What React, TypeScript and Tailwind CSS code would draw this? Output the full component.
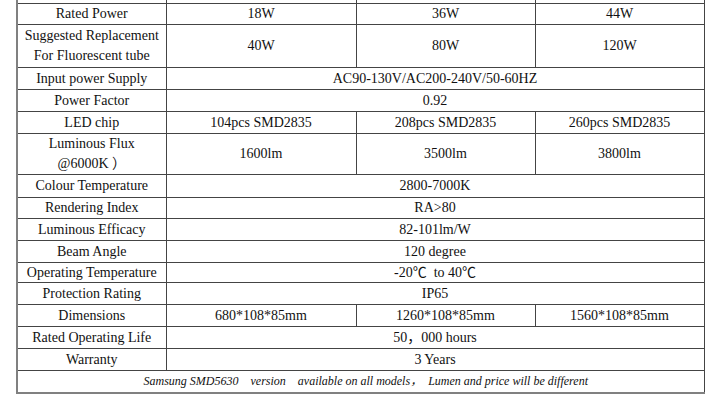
const rows: { label: React.ReactNode; values: string[]; h: number }[] = [
  { label: "Rated Power", values: ["18W", "36W", "44W"], h: 21 },
  {
    label: (
      <div className="leading-[20px]">
        Suggested Replacement
        <br />
        For Fluorescent tube
      </div>
    ),
    values: ["40W", "80W", "120W"],
    h: 43,
  },
  { label: "Input power Supply", values: ["AC90-130V/AC200-240V/50-60HZ"], h: 22 },
  { label: "Power Factor", values: ["0.92"], h: 22 },
  { label: "LED chip", values: ["104pcs SMD2835", "208pcs SMD2835", "260pcs SMD2835"], h: 22 },
  {
    label: (
      <div className="leading-[20px]">
        Luminous Flux
        <br />
        @6000K ）
      </div>
    ),
    values: ["1600lm", "3500lm", "3800lm"],
    h: 41,
  },
  { label: "Colour Temperature", values: ["2800-7000K"], h: 23 },
  { label: "Rendering Index", values: ["RA>80"], h: 21 },
  { label: "Luminous Efficacy", values: ["82-101lm/W"], h: 22 },
  { label: "Beam Angle", values: ["120 degree"], h: 22 },
  { label: "Operating Temperature", values: ["-20℃  to 40℃"], h: 20 },
  { label: "Protection Rating", values: ["IP65"], h: 22 },
  { label: "Dimensions", values: ["680*108*85mm", "1260*108*85mm", "1560*108*85mm"], h: 22 },
  { label: "Rated Operating Life", values: ["50，000 hours"], h: 22 },
  { label: "Warranty", values: ["3 Years"], h: 22 },
];

const cell = "border border-[#444] text-center align-middle p-0 leading-[17px] whitespace-pre";

export default function App() {
  return (
    <div
      className="w-[727px] h-[408px] overflow-hidden bg-white text-[14px] text-[#111]"
      style={{ fontFamily: '"Liberation Serif", "Noto Sans CJK SC", serif' }}
    >
      <div className="pl-[16px]">
        <table className="border-collapse w-[687px] table-fixed border-l-2 border-b-2 border-l-[#808080] border-b-[#808080]">
          <colgroup>
            <col className="w-[149px]" />
            <col className="w-[190px]" />
            <col className="w-[179px]" />
            <col className="w-[169px]" />
          </colgroup>
          <tbody>
            <tr className="h-[3px]">
              <td className="border border-[#444] border-t-0 p-0"></td>
              <td className="border border-[#444] border-t-0 p-0"></td>
              <td className="border border-[#444] border-t-0 p-0"></td>
              <td className="border border-[#444] border-t-0 p-0"></td>
            </tr>
            {rows.map((r, i) => (
              <tr key={i} style={{ height: r.h }}>
                <td className={cell}>{r.label}</td>
                {r.values.length === 1 ? (
                  <td className={cell} colSpan={3}>
                    {r.values[0]}
                  </td>
                ) : (
                  r.values.map((v, j) => (
                    <td key={j} className={cell}>
                      {v}
                    </td>
                  ))
                )}
              </tr>
            ))}
            <tr className="h-[23px]">
              <td className={cell + " text-[12px] italic pl-[10px]"} colSpan={4}>
                {"Samsung SMD5630    version    available on all models，  Lumen and price will be different"}
              </td>
            </tr>
          </tbody>
        </table>
      </div>
    </div>
  );
}
